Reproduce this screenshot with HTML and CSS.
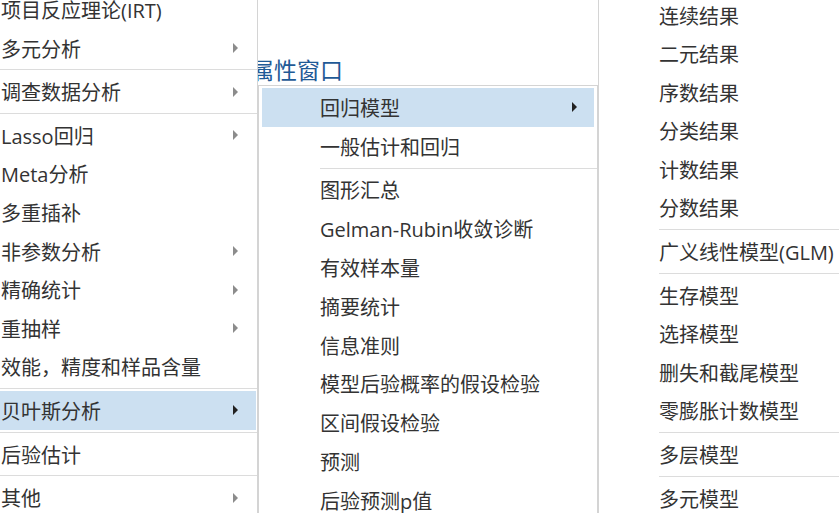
FILE: index.html
```html
<!DOCTYPE html>
<html lang="zh-CN">
<head>
    <meta charset="UTF-8">
    <title>贝叶斯分析菜单</title>
    <link rel="stylesheet" href="styles.css">
</head>
<body>
    <div class="screen">
        <ul class="menu menu-main">
            <li class="item">项目反应理论(IRT)</li>
            <li class="item sub">多元分析</li>
            <li class="sep"></li>
            <li class="item sub">调查数据分析</li>
            <li class="sep"></li>
            <li class="item sub">Lasso回归</li>
            <li class="item">Meta分析</li>
            <li class="item">多重插补</li>
            <li class="item sub">非参数分析</li>
            <li class="item sub">精确统计</li>
            <li class="item sub">重抽样</li>
            <li class="item">效能，精度和样品含量</li>
            <li class="sep"></li>
            <li class="item sub active">贝叶斯分析</li>
            <li class="sep"></li>
            <li class="item">后验估计</li>
            <li class="sep"></li>
            <li class="item sub">其他</li>
        </ul>

        <div class="column">
            <div class="caption">属性窗口</div>
            <ul class="menu menu-bayes">
                <li class="item sub active">回归模型</li>
                <li class="item">一般估计和回归</li>
                <li class="sep"></li>
                <li class="item">图形汇总</li>
                <li class="item">Gelman-Rubin收敛诊断</li>
                <li class="item">有效样本量</li>
                <li class="item">摘要统计</li>
                <li class="item">信息准则</li>
                <li class="item">模型后验概率的假设检验</li>
                <li class="item">区间假设检验</li>
                <li class="item">预测</li>
                <li class="item">后验预测p值</li>
            </ul>
        </div>

        <ul class="menu menu-models">
            <li class="item">连续结果</li>
            <li class="item">二元结果</li>
            <li class="item">序数结果</li>
            <li class="item">分类结果</li>
            <li class="item">计数结果</li>
            <li class="item">分数结果</li>
            <li class="sep"></li>
            <li class="item">广义线性模型(GLM)</li>
            <li class="sep"></li>
            <li class="item">生存模型</li>
            <li class="item">选择模型</li>
            <li class="item">删失和截尾模型</li>
            <li class="item">零膨胀计数模型</li>
            <li class="sep"></li>
            <li class="item">多层模型</li>
            <li class="sep"></li>
            <li class="item">多元模型</li>
        </ul>
    </div>
</body>
</html>
```

FILE: styles.css
```css
body {
    margin: 0;
    background: #fff;
    font-family: "Open Sans", "Noto Sans CJK SC", sans-serif;
    font-size: 20px;
    color: #333;
}
.screen {
    display: flex;
    align-items: flex-start;
    width: 839px;
    height: 513px;
    overflow: hidden;
}
.menu {
    list-style: none;
    margin: 0;
    padding: 0;
    background: #fff;
}
.item {
    display: flex;
    align-items: center;
    height: 38.6px;
    white-space: nowrap;
}
.item.sub::after {
    content: "";
    margin-left: auto;
    border-left: 5px solid #8c8c8c;
    border-top: 5px solid transparent;
    border-bottom: 5px solid transparent;
}
.item.active {
    background-color: #cce0f1;
}
.item.active::after {
    border-left-color: #222;
}
.sep {
    height: 1px;
    margin: 2px 0;
    background: #dcdcdc;
}

/* left menu, cut at the top and left */
.menu-main {
    position: relative;
    z-index: 2;
    flex: none;
    width: 257px;
    margin-top: -9.8px;
    border-right: 1px solid #d4d4d4;
}
.menu-main .item {
    padding-left: 1px;
    margin-right: 1px;
}
.menu-main .item.sub::after {
    margin-right: 18px;
}

/* middle column: window caption behind, submenu in front */
.column {
    flex: none;
    width: 340px;
}
.caption {
    height: 85px;
    box-sizing: border-box;
    padding-top: 57px;
    margin-left: -7px;
    line-height: 26px;
    font-size: 23px;
    white-space: nowrap;
    color: #1f5a96;
}
.menu-bayes {
    border: 1px solid #d4d4d4;
    padding: 2px 3px;
}
.menu-bayes .item {
    height: 38.8px;
    padding-left: 58px;
}
.menu-bayes .item.sub::after {
    margin-right: 17px;
}
.menu-bayes .sep {
    margin-left: 58px;
    margin-right: -3px;
}

/* right menu, runs off the right edge */
.menu-models {
    flex: none;
    width: 300px;
    margin-top: -4.3px;
    border-left: 1px solid #d4d4d4;
}
.menu-models .item {
    padding-left: 60px;
}
.menu-models .sep {
    margin-left: 60px;
}
```
